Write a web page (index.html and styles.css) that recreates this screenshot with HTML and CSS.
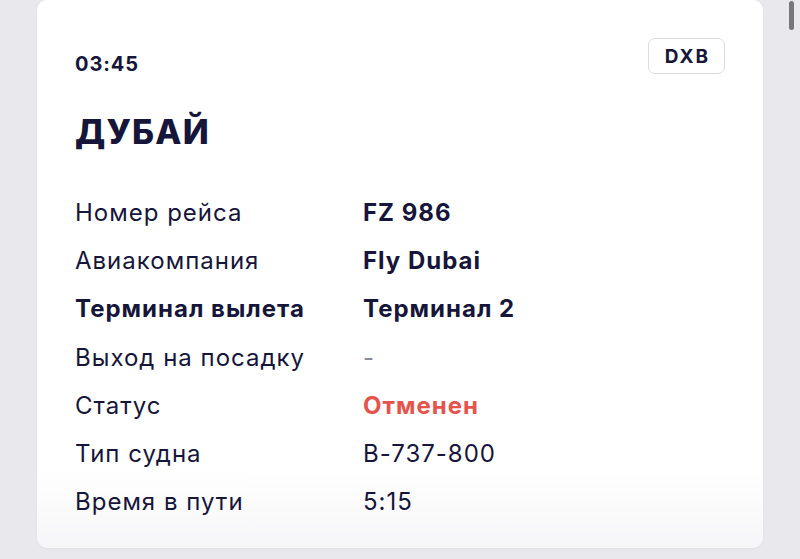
FILE: index.html
```html
<!DOCTYPE html>
<html lang="ru">
<head>
<meta charset="utf-8">
<title>Рейс FZ 986</title>
<link rel="stylesheet" href="styles.css">
</head>
<body>
<div class="page">
  <div class="card">
    <div class="head">
      <div class="time">03:45</div>
      <div class="code">DXB</div>
    </div>
    <h1 class="city">ДУБАЙ</h1>
    <div class="rows">
      <div class="row"><span class="label">Номер рейса</span><span class="value bold">FZ 986</span></div>
      <div class="row"><span class="label">Авиакомпания</span><span class="value bold">Fly Dubai</span></div>
      <div class="row"><span class="label bold">Терминал вылета</span><span class="value bold">Терминал 2</span></div>
      <div class="row"><span class="label">Выход на посадку</span><span class="value muted">-</span></div>
      <div class="row"><span class="label">Статус</span><span class="value bold red">Отменен</span></div>
      <div class="row"><span class="label">Тип судна</span><span class="value">B-737-800</span></div>
      <div class="row"><span class="label">Время в пути</span><span class="value">5:15</span></div>
    </div>
  </div>
  <div class="scrollbar"></div>
</div>
</body>
</html>
```
FILE: styles.css
```css
html, body {
  margin: 0;
  padding: 0;
}
body {
  background: #e9e9ed;
  font-family: Inter, "Noto Sans", sans-serif;
  color: #16163a;
  width: 800px;
  height: 559px;
  overflow: hidden;
}
.page {
  position: relative;
  padding: 0 37px;
  height: 559px;
}
.card {
  background: linear-gradient(#ffffff 0, #ffffff 470px, #f6f6f8 548px);
  border-radius: 10px;
  height: 548px;
  box-sizing: border-box;
  padding: 38px 38px 0 38px;
  box-shadow: 0 1px 3px rgba(0,0,0,0.04);
}
.head {
  display: flex;
  justify-content: space-between;
  align-items: flex-start;
}
.time {
  font-size: 20px;
  font-weight: 700;
  margin-top: 14px;
  letter-spacing: 0.9px;
}
.code {
  border: 1.5px solid #dcdce0;
  border-radius: 7px;
  width: 77px;
  height: 36px;
  box-sizing: border-box;
  display: flex;
  align-items: center;
  justify-content: center;
  padding-left: 2px;
  font-size: 19px;
  font-weight: 700;
  letter-spacing: 2px;
}
.city {
  margin: 36px 0 0 0;
  font-size: 34px;
  font-weight: 800;
  line-height: 40px;
  letter-spacing: 1.2px;
}
.rows {
  margin-top: 36px;
  display: flex;
  flex-direction: column;
}
.row {
  display: flex;
  height: 48.3px;
  align-items: center;
  font-size: 24px;
  letter-spacing: 1px;
}
.label {
  width: 288px;
  flex: none;
}
.bold {
  font-weight: 700;
}
.red {
  color: #e5544c;
}
.muted {
  color: #8a8a96;
}
.scrollbar {
  position: absolute;
  left: 789px;
  top: 1px;
  width: 5px;
  height: 29px;
  border-radius: 3px;
  background: #77777b;
}
```
